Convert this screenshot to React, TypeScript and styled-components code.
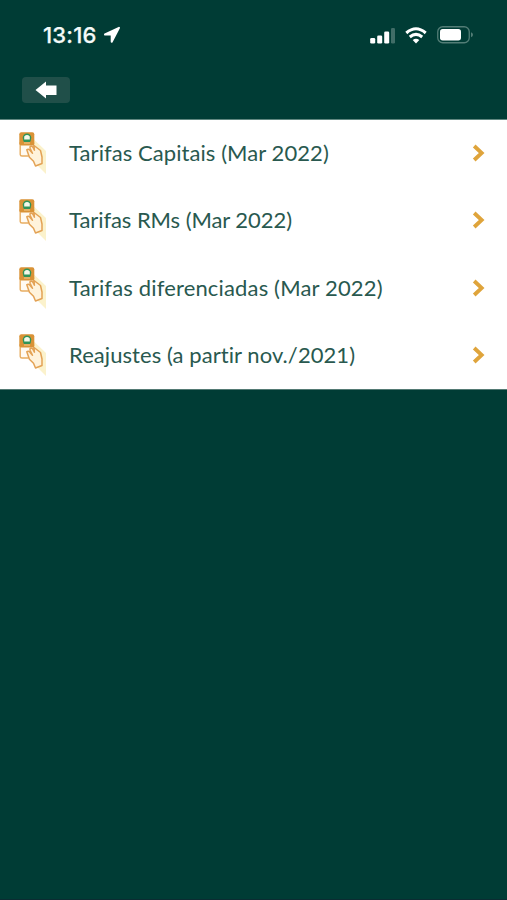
import React from "react";
import styled, { createGlobalStyle } from "styled-components";

const GlobalStyle = createGlobalStyle`
  * { box-sizing: border-box; }
  html, body { margin: 0; background: #003c35; }
  body { font-family: Lato, sans-serif; }
`;

const Screen = styled.div`
  display: flex;
  flex-direction: column;
  width: 100%;
  height: 900px;
  background: #003c35;
  border-bottom: 1px solid #0b2c32;
  overflow: hidden;
`;

const StatusBar = styled.header`
  display: flex;
  align-items: center;
  justify-content: space-between;
  height: 70px;
  padding: 0 34px 0 43px;
`;

const StatusGroup = styled.div<{ $gap: number }>`
  display: flex;
  align-items: center;
  gap: ${(p) => p.$gap}px;
`;

const Clock = styled.time`
  font: 500 22px/28px Inter, sans-serif;
  letter-spacing: 0.2px;
  color: #f5faf9;
  -webkit-text-stroke: 0.25px #f5faf9;
`;

const NavBar = styled.nav`
  height: 50px;
  padding: 7px 22px 0;
  border-bottom: 1px solid #608780;
`;

const BackButton = styled.button`
  display: flex;
  align-items: center;
  justify-content: center;
  width: 48px;
  height: 26px;
  padding: 0;
  border: 0;
  border-radius: 4px;
  background: #204f49;
`;

const Menu = styled.main`
  display: flex;
  flex-direction: column;
  height: 270px;
  background: #fff;
  border-bottom: 1px solid #547a74;
`;

const MenuRow = styled.a`
  display: flex;
  flex: none;
  align-items: center;
  height: 67.5px;
  padding: 0 22px 2px 18px;
  color: #29594f;

  &:last-child {
    height: 66.5px;
    padding-bottom: 1px;
  }
`;

const Label = styled.span<{ $tracking: number }>`
  flex: 1;
  margin-left: 21px;
  font-size: 22px;
  line-height: 30px;
  white-space: nowrap;
  letter-spacing: ${(p) => p.$tracking}px;
`;

const Icon = styled.svg`
  display: block;
  flex: none;
`;

const items = [
  { text: "Tarifas Capitais (Mar 2022)", tracking: 0.07 },
  { text: "Tarifas RMs (Mar 2022)", tracking: -0.07 },
  { text: "Tarifas diferenciadas (Mar 2022)", tracking: 0.16 },
  { text: "Reajustes (a partir nov./2021)", tracking: 0.07 },
];

function CardIcon() {
  return (
    <Icon width="30" height="44" viewBox="0 0 30 44">
      <path d="M16 8.5 28 20V43L20 35 15 29Z" fill="#fbf2cc" />
      <path
        d="M2.2 12V23.5Q2.2 25 4 25H10L15.5 21V12Z"
        fill="#fffaf2"
        stroke="#e8ad62"
        strokeWidth="1.4"
      />
      <rect x="1.3" y="1.3" width="15" height="13.2" rx="2" fill="#d99236" />
      <circle cx="9" cy="6.8" r="4.3" fill="#2f945a" />
      <path d="M6.2 5.5Q9 2.7 11.8 5.5V8.5H6.2Z" fill="#f4f8e9" />
      <path d="M4.8 9.2H13.2L12 11H6Z" fill="#2f945a" />
      <path d="M6 12H12" stroke="#f1cd91" strokeWidth="1" />
      <path
        d="M8.8 18.8Q10 17.4 11.7 19L14.5 22.3 12.2 17.5Q11.5 15.3 13 15Q14.3 14.9 15.3 17L16.4 19.2 16 14.5 22.5 19.5 24 26V32.5L17.5 35 15.5 30.2 11.4 26.2Z"
        fill="#fff3dc"
        stroke="#e3a255"
        strokeWidth="1.5"
        strokeLinejoin="round"
      />
    </Icon>
  );
}

function SignalIcon() {
  return (
    <Icon width="26" height="17" viewBox="0 0 26 17">
      <g fill="#fff">
        <rect x="1.2" y="11" width="5" height="5.5" rx="1.3" />
        <rect x="8.2" y="8.5" width="5" height="8" rx="1.3" />
        <rect x="15.2" y="4.5" width="5" height="12" rx="1.3" />
        <rect x="22" y="1" width="4" height="15.5" rx="1.3" opacity=".25" />
      </g>
    </Icon>
  );
}

function WifiIcon() {
  return (
    <Icon width="22" height="17" viewBox="0 0 22 17">
      <g fill="none" stroke="#fff" strokeWidth="3">
        <path d="M1.3 6Q11-2.4 20.7 6" />
        <path d="M4.8 10Q11 4.8 17.2 10" />
      </g>
      <path d="M7.7 13Q11 10.3 14.3 13L11 16.5Z" fill="#fff" />
    </Icon>
  );
}

function BatteryIcon() {
  return (
    <Icon width="36" height="18" viewBox="0 0 36 18">
      <rect x=".75" y=".75" width="31.5" height="16" rx="5" fill="none" stroke="#527d76" strokeWidth="1.3" />
      <rect x="3" y="3" width="21" height="11.5" rx="2.7" fill="#fff" />
      <path d="M34 6.3Q36 7 36 8.8T34 11.3Z" fill="#527d76" />
    </Icon>
  );
}

export default function App() {
  return (
    <>
      <GlobalStyle />
      <Screen>
        <StatusBar>
          <StatusGroup $gap={6}>
            <Clock>13:16</Clock>
            <Icon width="18" height="18" viewBox="0 0 18 18">
              <path
                d="M16 1.8 2 8.5H8.7V15.8Z"
                fill="#fff"
                stroke="#fff"
                strokeWidth="2"
                strokeLinejoin="round"
              />
            </Icon>
          </StatusGroup>
          <StatusGroup $gap={10}>
            <SignalIcon />
            <WifiIcon />
            <BatteryIcon />
          </StatusGroup>
        </StatusBar>
        <NavBar>
          <BackButton aria-label="Voltar">
            <Icon width="22" height="18" viewBox="0 0 22 18">
              <path d="M.5 9 11 .5V4.5H21.5V14H11V17.5Z" fill="#fff" />
            </Icon>
          </BackButton>
        </NavBar>
        <Menu>
          {items.map((item) => (
            <MenuRow key={item.text}>
              <CardIcon />
              <Label $tracking={item.tracking}>{item.text}</Label>
              <Icon width="13" height="18" viewBox="0 0 13 18">
                <path d="M2.2 2 9.7 9 2.2 16" fill="none" stroke="#dfa43b" strokeWidth="3.8" />
              </Icon>
            </MenuRow>
          ))}
        </Menu>
      </Screen>
    </>
  );
}
